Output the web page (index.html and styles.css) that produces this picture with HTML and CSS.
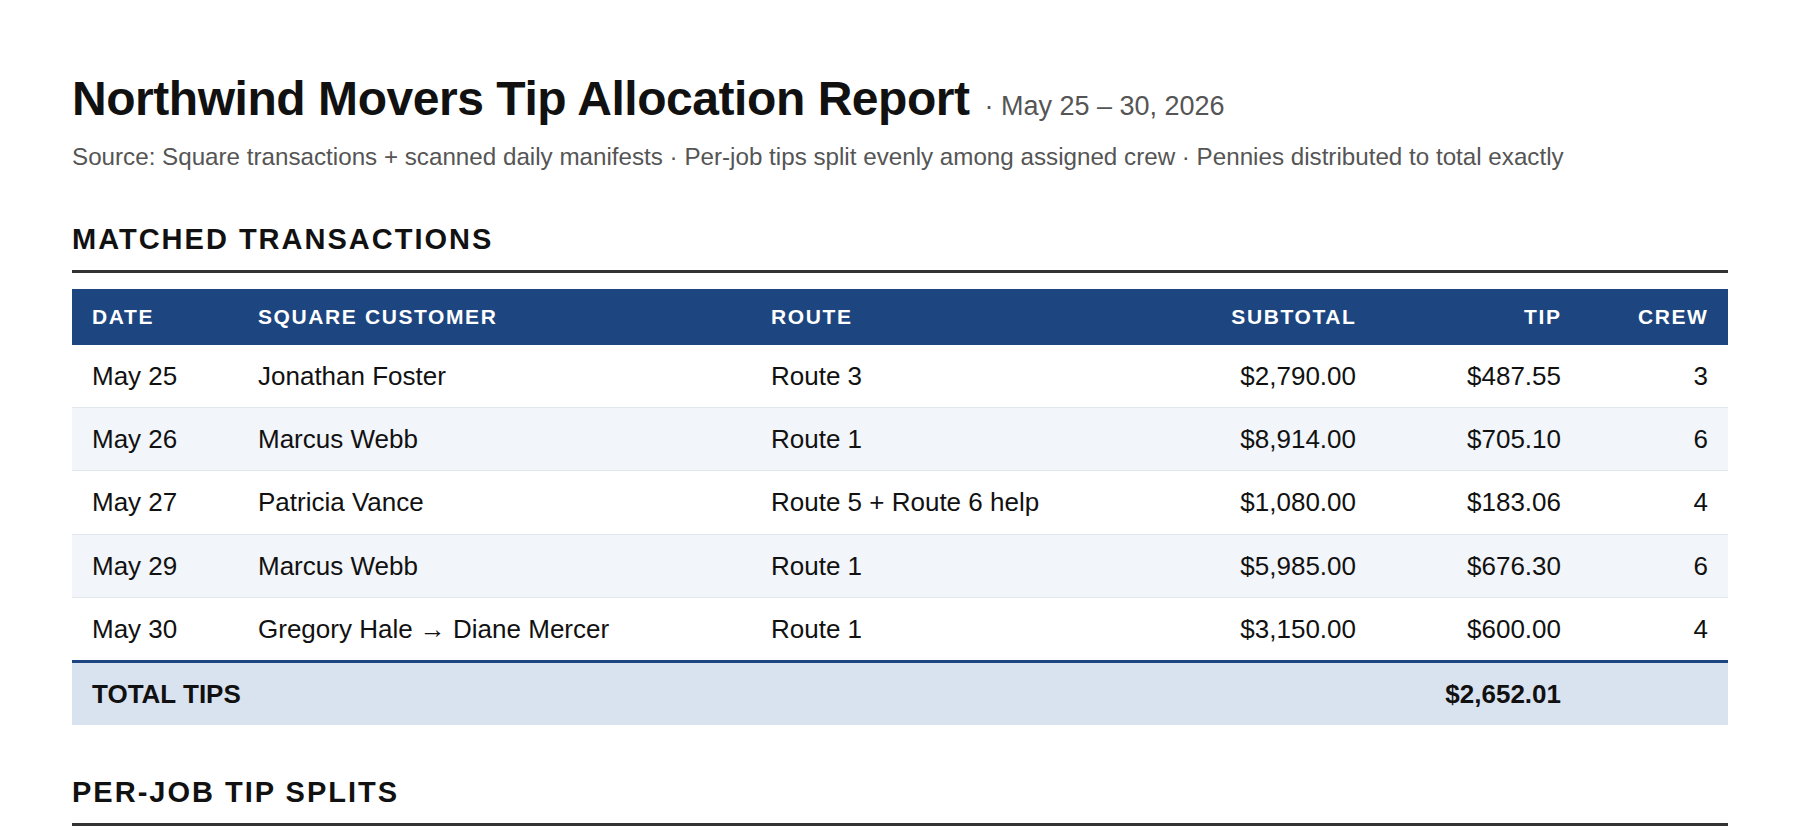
FILE: index.html
```html
<!DOCTYPE html>
<html lang="en">
<head>
<meta charset="utf-8">
<title>Northwind Movers Tip Allocation Report</title>
<link rel="stylesheet" href="styles.css">
</head>
<body>
<main class="page">
  <header class="report-head">
    <h1 class="title">Northwind Movers Tip Allocation Report <span class="title-date">· May 25 – 30, 2026</span></h1>
    <p class="subtitle">Source: Square transactions + scanned daily manifests · Per-job tips split evenly among assigned crew · Pennies distributed to total exactly</p>
  </header>

  <section class="section">
    <h2 class="section-title">Matched Transactions</h2>
    <table class="data">
      <colgroup>
        <col class="c-date"><col class="c-cust"><col class="c-route"><col class="c-sub"><col class="c-tip"><col class="c-crew">
      </colgroup>
      <thead>
        <tr>
          <th>Date</th>
          <th>Square Customer</th>
          <th>Route</th>
          <th class="num">Subtotal</th>
          <th class="num">Tip</th>
          <th class="num">Crew</th>
        </tr>
      </thead>
      <tbody>
        <tr><td>May 25</td><td>Jonathan Foster</td><td>Route 3</td><td class="num">$2,790.00</td><td class="num">$487.55</td><td class="num">3</td></tr>
        <tr><td>May 26</td><td>Marcus Webb</td><td>Route 1</td><td class="num">$8,914.00</td><td class="num">$705.10</td><td class="num">6</td></tr>
        <tr><td>May 27</td><td>Patricia Vance</td><td>Route 5 + Route 6 help</td><td class="num">$1,080.00</td><td class="num">$183.06</td><td class="num">4</td></tr>
        <tr><td>May 29</td><td>Marcus Webb</td><td>Route 1</td><td class="num">$5,985.00</td><td class="num">$676.30</td><td class="num">6</td></tr>
        <tr><td>May 30</td><td>Gregory Hale → Diane Mercer</td><td>Route 1</td><td class="num">$3,150.00</td><td class="num">$600.00</td><td class="num">4</td></tr>
      </tbody>
      <tfoot>
        <tr><td colspan="4">TOTAL TIPS</td><td class="num">$2,652.01</td><td></td></tr>
      </tfoot>
    </table>
  </section>

  <section class="section section-next">
    <h2 class="section-title">Per-Job Tip Splits</h2>
  </section>
</main>
</body>
</html>
```

FILE: styles.css
```css
* { box-sizing: border-box; }

html, body {
  margin: 0;
  padding: 0;
  background: #ffffff;
}

body {
  font-family: "Liberation Sans", Arial, Helvetica, sans-serif;
  color: #111111;
}

.page {
  padding: 71px 72px 0 72px;
}

.title {
  margin: 0;
  font-size: 48px;
  line-height: 56px;
  font-weight: 700;
  letter-spacing: -0.45px;
  color: #111111;
}

.title-date {
  font-size: 27px;
  line-height: 1;
  font-weight: 400;
  letter-spacing: 0;
  color: #555555;
  margin-left: 2px;
}

.subtitle {
  margin: 15px 0 0 0;
  font-size: 24.2px;
  line-height: 30px;
  color: #555555;
}

.section {
  margin-top: 49.5px;
}

.section-next {
  margin-top: 50px;
}

.section-title {
  margin: 0;
  font-size: 29px;
  line-height: 34px;
  font-weight: 700;
  letter-spacing: 2px;
  text-transform: uppercase;
  color: #111111;
  padding-bottom: 14px;
  border-bottom: 3px solid #333333;
}

.data {
  width: 100%;
  margin-top: 16px;
  border-collapse: collapse;
  table-layout: fixed;
  font-size: 26px;
}

.c-date { width: 166px; }
.c-cust { width: 513px; }
.c-route { width: 372px; }
.c-sub { width: 253px; }
.c-tip { width: 205px; }
.c-crew { width: 147px; }

.data th {
  background: #1d4580;
  color: #ffffff;
  font-size: 21px;
  font-weight: 700;
  letter-spacing: 1.6px;
  text-transform: uppercase;
  text-align: left;
  height: 56px;
  padding: 0 20px;
  line-height: 24px;
}

.data th.num {
  text-align: right;
  padding-right: 19.5px;
}

.data td {
  padding: 16.2px 20px;
  line-height: 30px;
  border-bottom: 1px solid #e2e7ee;
  white-space: nowrap;
}

.data tbody tr:nth-child(even) td {
  background: #f2f5fa;
}

.data tbody tr:last-child td {
  border-bottom: none;
}

.data .num {
  text-align: right;
}

.data tfoot td {
  background: #d9e3f0;
  border-top: 3px solid #1d4580;
  border-bottom: none;
  font-weight: 700;
  padding: 16px 20px;
}
```
